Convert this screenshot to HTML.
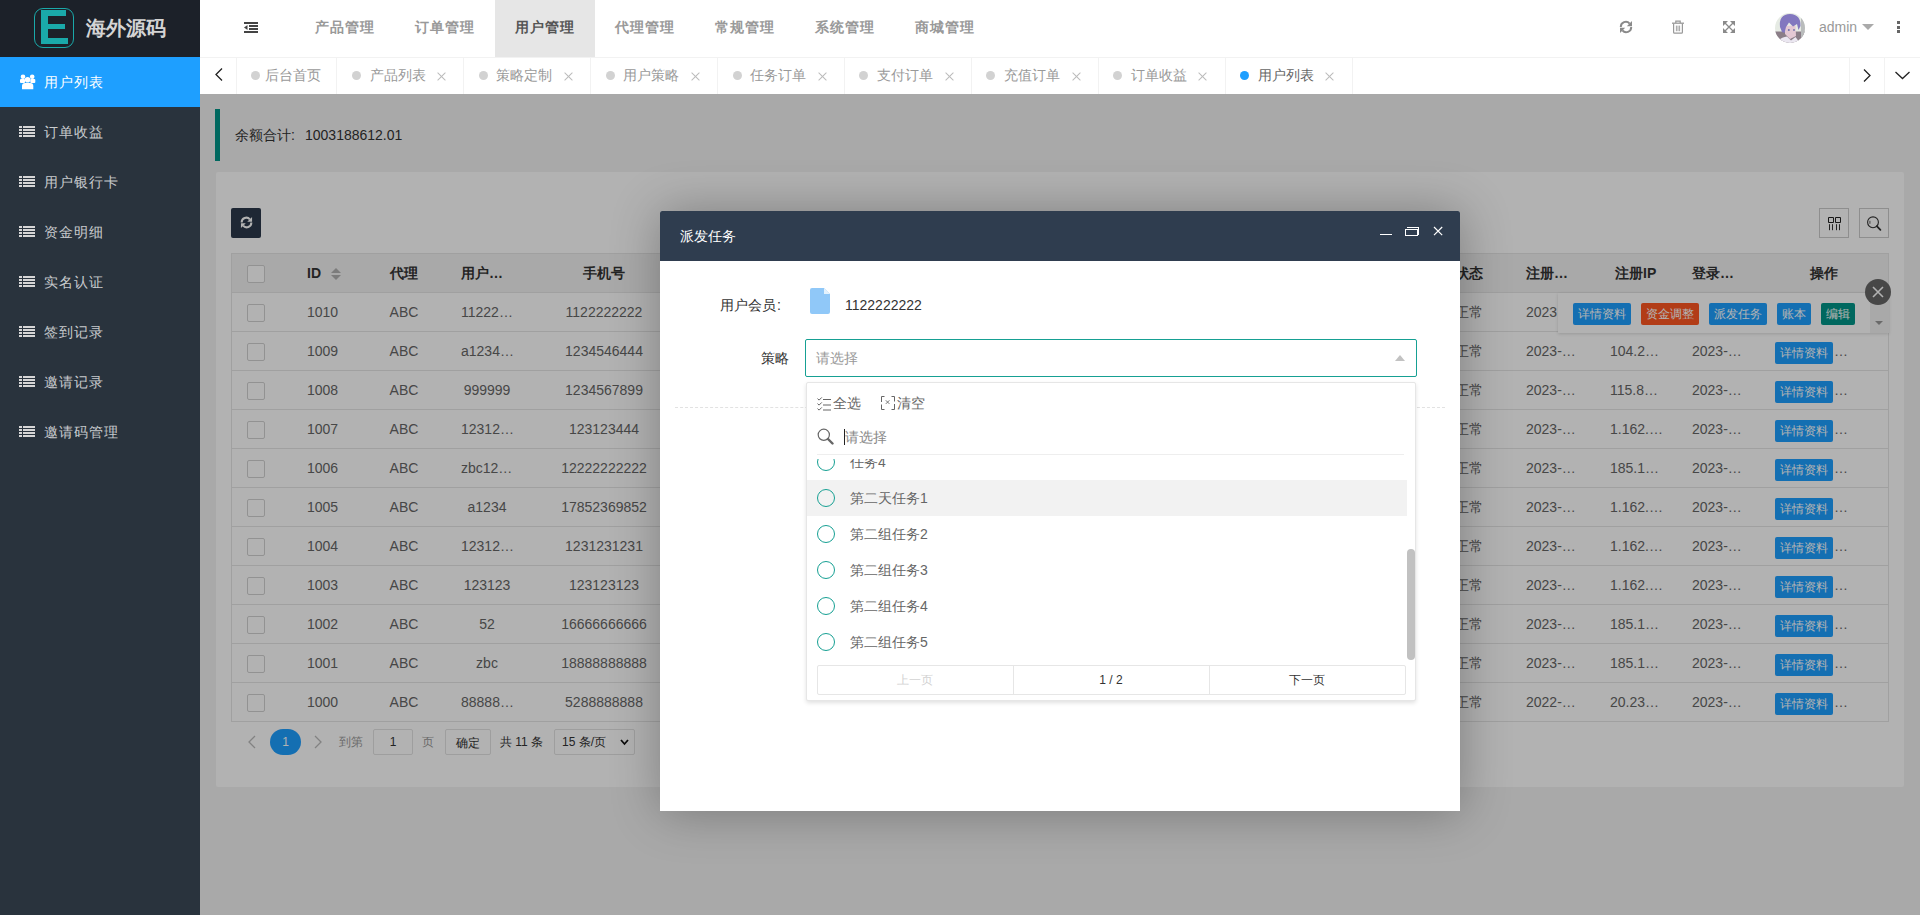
<!DOCTYPE html><html><head><meta charset="utf-8"><title>派发任务</title><style>
*{box-sizing:border-box}
html,body{margin:0;padding:0}
body{width:1920px;height:915px;overflow:hidden;position:relative;background:#f2f2f2;font-family:"Liberation Sans",sans-serif;font-size:14px;color:#666}
.a{position:absolute;white-space:nowrap}
.t{position:absolute;white-space:nowrap;height:20px;line-height:20px}
.c{text-align:center}
#side{position:absolute;left:0;top:0;width:200px;height:915px;background:#29333d}
#logo{position:absolute;left:0;top:0;width:200px;height:57px;background:#1c2129}
.mi{position:absolute;left:0;width:200px;height:50px}
.mi .tx{position:absolute;left:44px;top:15px;line-height:20px;color:rgba(255,255,255,.75);font-size:14px;letter-spacing:1px}
.li{position:absolute;left:19px;width:16px;height:11px}
.li i{position:absolute;left:0;width:16px;height:2px;background:#d6d6d6}
.li i:before{content:"";position:absolute;left:3px;top:0;width:1px;height:2px;background:#29333d}
#hdr{position:absolute;left:200px;top:0;width:1720px;height:57px;background:#fff}
.nv{position:absolute;top:17px;line-height:20px;color:#999;font-weight:bold;font-size:14px;letter-spacing:1px}
#tabs{position:absolute;left:200px;top:57px;width:1720px;height:37px;background:#fff;border-top:1px solid #f2f2f2}
.sep{position:absolute;top:0;width:1px;height:36px;background:#f2f2f2}
.dot{position:absolute;top:13px;width:9px;height:9px;border-radius:50%;background:#d2d2d2}
.tt{position:absolute;top:7px;line-height:20px;color:#999}
.cl{position:absolute;top:13.5px;width:9px;height:9px}
.cl:before,.cl:after{content:"";position:absolute;left:4px;top:-1px;width:1px;height:11px;background:#bbb;transform:rotate(45deg)}
.cl:after{transform:rotate(-45deg)}
#card{position:absolute;left:216px;top:172px;width:1688px;height:615px;background:#fff;border-radius:2px}
.hd{position:absolute;height:20px;line-height:20px;color:#333;font-weight:bold;white-space:nowrap}
.cel{position:absolute;height:20px;line-height:20px;color:#666;white-space:nowrap}
.cb{position:absolute;left:247px;width:18px;height:18px;border:1px solid #d2d2d2;border-radius:2px;background:#fff}
.hl{position:absolute;left:231px;width:1658px;height:1px;background:#e6e6e6}
.bx{position:absolute;height:22px;line-height:22px;font-size:12px;color:#fff;padding:0 5px;border-radius:2px;background:#1E9FFF}
#shade{position:absolute;left:200px;top:94px;width:1720px;height:821px;background:rgba(0,0,0,.3)}
#modal{position:absolute;left:660px;top:211px;width:800px;height:600px;background:#fff;border-radius:2px 2px 0 0;box-shadow:1px 1px 50px rgba(0,0,0,.3)}
#mtitle{position:absolute;left:0;top:0;width:800px;height:50px;background:#2f3d4f;border-radius:2px 2px 0 0}
.rad{position:absolute;left:817px;width:18px;height:18px;border:1px solid #009688;border-radius:50%}
</style></head><body>
<div id="side"><div id="logo">
<div class="a" style="left:34px;top:8px;width:40px;height:40px;border:1.5px solid #1aa9a9;border-radius:9px"></div>
<div class="a" style="left:41px;top:10px;width:7px;height:34px;background:#1aa9a9"></div>
<div class="a" style="left:41px;top:10px;width:25px;height:6px;background:#1aa9a9"></div>
<div class="a" style="left:41px;top:24px;width:24px;height:5px;background:#1aa9a9"></div>
<div class="a" style="left:41px;top:38px;width:27px;height:6px;background:#1aa9a9"></div>
<div class="a" style="left:86px;top:16px;line-height:24px;font-size:20px;font-weight:bold;color:#d4d4d4">海外源码</div>
</div>
<div class="mi" style="top:57px;background:#1E9FFF">
<svg class="a" style="left:19px;top:17px" width="17" height="16" viewBox="0 0 17 16"><circle cx="4" cy="2.8" r="2.3" fill="#fff"/><circle cx="13.2" cy="2.8" r="2.3" fill="#fff"/><rect x="1" y="5" width="5" height="4" rx="1" fill="#fff"/><rect x="11.3" y="5" width="5" height="4" rx="1" fill="#fff"/><circle cx="8.6" cy="5.8" r="2.8" fill="#fff"/><path d="M3 15.2V12q0-3 3-3h5.3q3 0 3 3v3.2z" fill="#fff"/></svg>
<div class="tx" style="color:#fff">用户列表</div></div>
<div class="mi" style="top:107px">
<div class="li" style="top:19px"><i style="top:0"></i><i style="top:3px"></i><i style="top:6px"></i><i style="top:9px"></i></div>
<div class="tx">订单收益</div></div>
<div class="mi" style="top:157px">
<div class="li" style="top:19px"><i style="top:0"></i><i style="top:3px"></i><i style="top:6px"></i><i style="top:9px"></i></div>
<div class="tx">用户银行卡</div></div>
<div class="mi" style="top:207px">
<div class="li" style="top:19px"><i style="top:0"></i><i style="top:3px"></i><i style="top:6px"></i><i style="top:9px"></i></div>
<div class="tx">资金明细</div></div>
<div class="mi" style="top:257px">
<div class="li" style="top:19px"><i style="top:0"></i><i style="top:3px"></i><i style="top:6px"></i><i style="top:9px"></i></div>
<div class="tx">实名认证</div></div>
<div class="mi" style="top:307px">
<div class="li" style="top:19px"><i style="top:0"></i><i style="top:3px"></i><i style="top:6px"></i><i style="top:9px"></i></div>
<div class="tx">签到记录</div></div>
<div class="mi" style="top:357px">
<div class="li" style="top:19px"><i style="top:0"></i><i style="top:3px"></i><i style="top:6px"></i><i style="top:9px"></i></div>
<div class="tx">邀请记录</div></div>
<div class="mi" style="top:407px">
<div class="li" style="top:19px"><i style="top:0"></i><i style="top:3px"></i><i style="top:6px"></i><i style="top:9px"></i></div>
<div class="tx">邀请码管理</div></div>
</div>
<div id="hdr">
<svg class="a" style="left:44px;top:22px" width="14" height="11" viewBox="0 0 14 11"><rect x="0" y="0" width="14" height="2" fill="#444"/><rect x="5" y="3" width="9" height="2" fill="#444"/><rect x="5" y="6" width="9" height="2" fill="#444"/><rect x="0" y="9" width="14" height="2" fill="#444"/><path d="M0 5.5L3.5 3v5z" fill="#444"/></svg>
<div class="nv" style="left:115px">产品管理</div>
<div class="nv" style="left:215px">订单管理</div>
<div class="a" style="left:295px;top:0;width:100px;height:57px;background:#e6e6e6"></div>
<div class="nv" style="left:315px;color:#555">用户管理</div>
<div class="nv" style="left:415px">代理管理</div>
<div class="nv" style="left:515px">常规管理</div>
<div class="nv" style="left:615px">系统管理</div>
<div class="nv" style="left:715px">商城管理</div>
<svg class="a" style="left:1419px;top:20px" width="14" height="14" viewBox="0 0 14 14"><path d="M1.8 7A5 5 0 0 1 10.6 3.6" stroke="#8a8a8a" stroke-width="2" fill="none"/><path d="M13 1v5.2H7.8z" fill="#8a8a8a"/><path d="M12.2 7A5 5 0 0 1 3.4 10.4" stroke="#8a8a8a" stroke-width="2" fill="none"/><path d="M1 13V7.8h5.2z" fill="#8a8a8a"/></svg>
<svg class="a" style="left:1472px;top:20px" width="12" height="14" viewBox="0 0 12 14"><path d="M3.8 3V1.2h4.4V3" stroke="#999" stroke-width="1.2" fill="none"/><path d="M0 3.2h12" stroke="#999" stroke-width="1.3"/><path d="M1.6 3.6V12.2q0 .9 .9 .9h7q.9 0 .9-.9V3.6" stroke="#999" stroke-width="1.2" fill="none"/><path d="M4.4 5.6v5.6M6 5.6v5.6M7.6 5.6v5.6" stroke="#999" stroke-width="0.9"/></svg>
<svg class="a" style="left:1523px;top:21px" width="12" height="12" viewBox="0 0 12 12"><path d="M0 0h5L0 5zM12 0v5L7 0zM0 12V7l5 5zM12 12H7l5-5z" fill="#8a8a8a"/><path d="M1.5 1.5l9 9M10.5 1.5l-9 9" stroke="#8a8a8a" stroke-width="1.3"/></svg>
<svg class="a" style="left:1575px;top:13px" width="30" height="30" viewBox="0 0 30 30"><defs><clipPath id="cp"><circle cx="15" cy="15" r="15"/></clipPath></defs><g clip-path="url(#cp)"><rect width="30" height="30" fill="#e6ebe4"/><rect y="18.5" width="30" height="12" fill="#8b7e88"/><rect x="26" y="4" width="4" height="20" fill="#b9bcbc"/><path d="M10 13L20.5 12.5L21 23L15 26L10 21z" fill="#e4c8d4"/><path d="M1 30Q6 24 12 23.5L16 27.5L20.5 24Q23 27 24.5 30z" fill="#ebe7f1"/><path d="M5 14Q3.5 1.5 15 1Q26 1.5 25.5 13L23.5 17L22 11L18 13.5L14 9.5L11 14L9.5 20L7 19Z" fill="#8277bf"/><circle cx="13.8" cy="17" r="1" fill="#6e70a8"/><circle cx="19" cy="17" r="0.9" fill="#6e70a8"/></g></svg>
<div class="t" style="left:1619px;top:17px;color:#999;font-size:14px">admin</div>
<div class="a" style="left:1662px;top:24px;width:0;height:0;border-left:6px solid transparent;border-right:6px solid transparent;border-top:6px solid #aaa"></div>
<div class="a" style="left:1697px;top:21px;width:3px;height:3px;background:#666"></div><div class="a" style="left:1697px;top:25.5px;width:3px;height:3px;background:#666"></div><div class="a" style="left:1697px;top:30px;width:3px;height:3px;background:#666"></div>
</div>
<div id="tabs">
<svg class="a" style="left:15px;top:10px" width="8" height="13" viewBox="0 0 8 13"><path d="M7 0.5L1 6.5l6 6" stroke="#222" stroke-width="1.3" fill="none"/></svg>
<div class="sep" style="left:36px"></div>
<div class="dot" style="left:51px"></div>
<div class="tt" style="left:65px">后台首页</div>
<div class="sep" style="left:136px"></div>
<div class="dot" style="left:151.8px;background:#d2d2d2"></div>
<div class="tt" style="left:169.5px;color:#999">产品列表</div>
<div class="cl" style="left:237.0px"></div>
<div class="sep" style="left:263.4px"></div>
<div class="dot" style="left:278.7px;background:#d2d2d2"></div>
<div class="tt" style="left:296.4px;color:#999">策略定制</div>
<div class="cl" style="left:363.9px"></div>
<div class="sep" style="left:390.3px"></div>
<div class="dot" style="left:405.6px;background:#d2d2d2"></div>
<div class="tt" style="left:423.3px;color:#999">用户策略</div>
<div class="cl" style="left:490.8px"></div>
<div class="sep" style="left:517.2px"></div>
<div class="dot" style="left:532.5px;background:#d2d2d2"></div>
<div class="tt" style="left:550.2px;color:#999">任务订单</div>
<div class="cl" style="left:617.7px"></div>
<div class="sep" style="left:644.1px"></div>
<div class="dot" style="left:659.4px;background:#d2d2d2"></div>
<div class="tt" style="left:677.1px;color:#999">支付订单</div>
<div class="cl" style="left:744.6px"></div>
<div class="sep" style="left:771.0px"></div>
<div class="dot" style="left:786.3px;background:#d2d2d2"></div>
<div class="tt" style="left:804.0px;color:#999">充值订单</div>
<div class="cl" style="left:871.5px"></div>
<div class="sep" style="left:897.9px"></div>
<div class="dot" style="left:913.2px;background:#d2d2d2"></div>
<div class="tt" style="left:930.9px;color:#999">订单收益</div>
<div class="cl" style="left:998.4px"></div>
<div class="sep" style="left:1024.8px"></div>
<div class="dot" style="left:1040.1px;background:#1E9FFF"></div>
<div class="tt" style="left:1057.8px;color:#666">用户列表</div>
<div class="cl" style="left:1125.3px"></div>
<div class="sep" style="left:1151.7px"></div>
<div class="sep" style="left:1649px"></div><div class="sep" style="left:1684px"></div>
<svg class="a" style="left:1663px;top:11px" width="8" height="13" viewBox="0 0 8 13"><path d="M1 0.5l6 6-6 6" stroke="#222" stroke-width="1.3" fill="none"/></svg>
<svg class="a" style="left:1695px;top:13px" width="15" height="9" viewBox="0 0 15 9"><path d="M0.5 1l7 6.5 7-6.5" stroke="#222" stroke-width="1.3" fill="none"/></svg>
</div>
<div class="a" style="left:215px;top:109px;width:5px;height:52px;background:#009688"></div>
<div class="t" style="left:235px;top:125px;color:#333">余额合计<span style="display:inline-block;width:14px">:</span>1003188612.01</div>
<div id="card"></div>
<div class="a" style="left:231px;top:208px;width:30px;height:30px;background:#2b394b;border-radius:2px"></div>
<svg class="a" style="left:240px;top:216px" width="13" height="13" viewBox="0 0 14 14"><path d="M1.8 7A5 5 0 0 1 10.6 3.6" stroke="#fff" stroke-width="2.2" fill="none"/><path d="M13 1v5.2H7.8z" fill="#fff"/><path d="M12.2 7A5 5 0 0 1 3.4 10.4" stroke="#fff" stroke-width="2.2" fill="none"/><path d="M1 13V7.8h5.2z" fill="#fff"/></svg>
<div class="a" style="left:1819px;top:208px;width:30px;height:30px;border:1px solid #ccc"></div>
<svg class="a" style="left:1827px;top:216px" width="16" height="16" viewBox="0 0 16 16"><path d="M1.5 1.5h5v5h-5zM8.5 1.5h5v5h-5z" stroke="#222" stroke-width="1" fill="none"/><path d="M2.5 8.2v6M5.5 8.2v6M9.5 8.2v6M12.5 8.2v6" stroke="#333" stroke-width="1"/></svg>
<div class="a" style="left:1859px;top:208px;width:30px;height:30px;border:1px solid #ccc"></div>
<svg class="a" style="left:1866px;top:215px" width="17" height="17" viewBox="0 0 17 17"><circle cx="7" cy="7.3" r="5.4" stroke="#333" stroke-width="1.1" fill="none"/><path d="M3.9 5.8v3" stroke="#333" stroke-width="0.8"/><path d="M10.8 11.2l3.6 3.6" stroke="#333" stroke-width="1.8" stroke-linecap="round"/></svg>
<div class="a" style="left:231px;top:253px;width:1658px;height:469px;border:1px solid #e6e6e6"></div>
<div class="a" style="left:232px;top:254px;width:1656px;height:38px;background:#f2f2f2"></div>
<div class="hl" style="top:292px"></div>
<div class="hl" style="top:331px"></div>
<div class="hl" style="top:370px"></div>
<div class="hl" style="top:409px"></div>
<div class="hl" style="top:448px"></div>
<div class="hl" style="top:487px"></div>
<div class="hl" style="top:526px"></div>
<div class="hl" style="top:565px"></div>
<div class="hl" style="top:604px"></div>
<div class="hl" style="top:643px"></div>
<div class="hl" style="top:682px"></div>
<div class="hl" style="top:721px"></div>
<div class="cb" style="top:265px"></div>
<div class="hd" style="left:307px;top:263px">ID</div>
<div class="a" style="left:331px;top:268px;border-left:5px solid transparent;border-right:5px solid transparent;border-bottom:5px solid #b2b2b2"></div>
<div class="a" style="left:331px;top:275px;border-left:5px solid transparent;border-right:5px solid transparent;border-top:5px solid #b2b2b2"></div>
<div class="hd" style="left:390px;top:263px">代理</div>
<div class="hd" style="left:461px;top:263px">用户…</div>
<div class="hd" style="left:583px;top:263px">手机号</div>
<div class="hd" style="left:1455px;top:263px">状态</div>
<div class="hd" style="left:1526px;top:263px">注册…</div>
<div class="hd" style="left:1615px;top:263px">注册IP</div>
<div class="hd" style="left:1692px;top:263px">登录…</div>
<div class="hd" style="left:1810px;top:263px">操作</div>
<div class="cb" style="top:304px"></div>
<div class="cel" style="left:307px;top:302px">1010</div>
<div class="cel c" style="left:364px;width:80px;top:302px">ABC</div>
<div class="cel" style="left:461px;top:302px">11222…</div>
<div class="cel c" style="left:544px;width:120px;top:302px">1122222222</div>
<div class="cel" style="left:1455px;top:302px">正常</div>
<div class="cel" style="left:1526px;top:302px">2023</div>
<div class="cb" style="top:343px"></div>
<div class="cel" style="left:307px;top:341px">1009</div>
<div class="cel c" style="left:364px;width:80px;top:341px">ABC</div>
<div class="cel" style="left:461px;top:341px">a1234…</div>
<div class="cel c" style="left:544px;width:120px;top:341px">1234546444</div>
<div class="cel" style="left:1455px;top:341px">正常</div>
<div class="cel" style="left:1526px;top:341px">2023-…</div>
<div class="cel" style="left:1610px;top:341px">104.2…</div>
<div class="cel" style="left:1692px;top:341px">2023-…</div>
<div class="bx" style="left:1775px;top:342px">详情资料</div>
<div class="cel" style="left:1834px;top:341px">…</div>
<div class="cb" style="top:382px"></div>
<div class="cel" style="left:307px;top:380px">1008</div>
<div class="cel c" style="left:364px;width:80px;top:380px">ABC</div>
<div class="cel c" style="left:437px;width:100px;top:380px">999999</div>
<div class="cel c" style="left:544px;width:120px;top:380px">1234567899</div>
<div class="cel" style="left:1455px;top:380px">正常</div>
<div class="cel" style="left:1526px;top:380px">2023-…</div>
<div class="cel" style="left:1610px;top:380px">115.8…</div>
<div class="cel" style="left:1692px;top:380px">2023-…</div>
<div class="bx" style="left:1775px;top:381px">详情资料</div>
<div class="cel" style="left:1834px;top:380px">…</div>
<div class="cb" style="top:421px"></div>
<div class="cel" style="left:307px;top:419px">1007</div>
<div class="cel c" style="left:364px;width:80px;top:419px">ABC</div>
<div class="cel" style="left:461px;top:419px">12312…</div>
<div class="cel c" style="left:544px;width:120px;top:419px">123123444</div>
<div class="cel" style="left:1455px;top:419px">正常</div>
<div class="cel" style="left:1526px;top:419px">2023-…</div>
<div class="cel" style="left:1610px;top:419px">1.162.…</div>
<div class="cel" style="left:1692px;top:419px">2023-…</div>
<div class="bx" style="left:1775px;top:420px">详情资料</div>
<div class="cel" style="left:1834px;top:419px">…</div>
<div class="cb" style="top:460px"></div>
<div class="cel" style="left:307px;top:458px">1006</div>
<div class="cel c" style="left:364px;width:80px;top:458px">ABC</div>
<div class="cel" style="left:461px;top:458px">zbc12…</div>
<div class="cel c" style="left:544px;width:120px;top:458px">12222222222</div>
<div class="cel" style="left:1455px;top:458px">正常</div>
<div class="cel" style="left:1526px;top:458px">2023-…</div>
<div class="cel" style="left:1610px;top:458px">185.1…</div>
<div class="cel" style="left:1692px;top:458px">2023-…</div>
<div class="bx" style="left:1775px;top:459px">详情资料</div>
<div class="cel" style="left:1834px;top:458px">…</div>
<div class="cb" style="top:499px"></div>
<div class="cel" style="left:307px;top:497px">1005</div>
<div class="cel c" style="left:364px;width:80px;top:497px">ABC</div>
<div class="cel c" style="left:437px;width:100px;top:497px">a1234</div>
<div class="cel c" style="left:544px;width:120px;top:497px">17852369852</div>
<div class="cel" style="left:1455px;top:497px">正常</div>
<div class="cel" style="left:1526px;top:497px">2023-…</div>
<div class="cel" style="left:1610px;top:497px">1.162.…</div>
<div class="cel" style="left:1692px;top:497px">2023-…</div>
<div class="bx" style="left:1775px;top:498px">详情资料</div>
<div class="cel" style="left:1834px;top:497px">…</div>
<div class="cb" style="top:538px"></div>
<div class="cel" style="left:307px;top:536px">1004</div>
<div class="cel c" style="left:364px;width:80px;top:536px">ABC</div>
<div class="cel" style="left:461px;top:536px">12312…</div>
<div class="cel c" style="left:544px;width:120px;top:536px">1231231231</div>
<div class="cel" style="left:1455px;top:536px">正常</div>
<div class="cel" style="left:1526px;top:536px">2023-…</div>
<div class="cel" style="left:1610px;top:536px">1.162.…</div>
<div class="cel" style="left:1692px;top:536px">2023-…</div>
<div class="bx" style="left:1775px;top:537px">详情资料</div>
<div class="cel" style="left:1834px;top:536px">…</div>
<div class="cb" style="top:577px"></div>
<div class="cel" style="left:307px;top:575px">1003</div>
<div class="cel c" style="left:364px;width:80px;top:575px">ABC</div>
<div class="cel c" style="left:437px;width:100px;top:575px">123123</div>
<div class="cel c" style="left:544px;width:120px;top:575px">123123123</div>
<div class="cel" style="left:1455px;top:575px">正常</div>
<div class="cel" style="left:1526px;top:575px">2023-…</div>
<div class="cel" style="left:1610px;top:575px">1.162.…</div>
<div class="cel" style="left:1692px;top:575px">2023-…</div>
<div class="bx" style="left:1775px;top:576px">详情资料</div>
<div class="cel" style="left:1834px;top:575px">…</div>
<div class="cb" style="top:616px"></div>
<div class="cel" style="left:307px;top:614px">1002</div>
<div class="cel c" style="left:364px;width:80px;top:614px">ABC</div>
<div class="cel c" style="left:437px;width:100px;top:614px">52</div>
<div class="cel c" style="left:544px;width:120px;top:614px">16666666666</div>
<div class="cel" style="left:1455px;top:614px">正常</div>
<div class="cel" style="left:1526px;top:614px">2023-…</div>
<div class="cel" style="left:1610px;top:614px">185.1…</div>
<div class="cel" style="left:1692px;top:614px">2023-…</div>
<div class="bx" style="left:1775px;top:615px">详情资料</div>
<div class="cel" style="left:1834px;top:614px">…</div>
<div class="cb" style="top:655px"></div>
<div class="cel" style="left:307px;top:653px">1001</div>
<div class="cel c" style="left:364px;width:80px;top:653px">ABC</div>
<div class="cel c" style="left:437px;width:100px;top:653px">zbc</div>
<div class="cel c" style="left:544px;width:120px;top:653px">18888888888</div>
<div class="cel" style="left:1455px;top:653px">正常</div>
<div class="cel" style="left:1526px;top:653px">2023-…</div>
<div class="cel" style="left:1610px;top:653px">185.1…</div>
<div class="cel" style="left:1692px;top:653px">2023-…</div>
<div class="bx" style="left:1775px;top:654px">详情资料</div>
<div class="cel" style="left:1834px;top:653px">…</div>
<div class="cb" style="top:694px"></div>
<div class="cel" style="left:307px;top:692px">1000</div>
<div class="cel c" style="left:364px;width:80px;top:692px">ABC</div>
<div class="cel" style="left:461px;top:692px">88888…</div>
<div class="cel c" style="left:544px;width:120px;top:692px">5288888888</div>
<div class="cel" style="left:1455px;top:692px">正常</div>
<div class="cel" style="left:1526px;top:692px">2022-…</div>
<div class="cel" style="left:1610px;top:692px">20.23…</div>
<div class="cel" style="left:1692px;top:692px">2023-…</div>
<div class="bx" style="left:1775px;top:693px">详情资料</div>
<div class="cel" style="left:1834px;top:692px">…</div>
<div class="a" style="left:1558px;top:293px;width:331px;height:40px;background:#fff;box-shadow:0 1px 3px rgba(0,0,0,.15)"></div>
<div class="a" style="left:1870px;top:293px;width:19px;height:40px;background:#f2f2f2"></div>
<div class="a" style="left:1875px;top:321px;border-left:4px solid transparent;border-right:4px solid transparent;border-top:4px solid #999"></div>
<div class="bx" style="left:1573px;top:303px;background:#1E9FFF">详情资料</div>
<div class="bx" style="left:1641px;top:303px;background:#FF5722">资金调整</div>
<div class="bx" style="left:1709px;top:303px;background:#1E9FFF">派发任务</div>
<div class="bx" style="left:1777px;top:303px;background:#1E9FFF">账本</div>
<div class="bx" style="left:1821px;top:303px;background:#009688">编辑</div>
<div class="a" style="left:1865px;top:279px;width:26px;height:26px;border-radius:50%;background:#666"></div>
<svg class="a" style="left:1872px;top:286px" width="12" height="12" viewBox="0 0 12 12"><path d="M1 1l10 10M11 1L1 11" stroke="#fff" stroke-width="1.6"/></svg>
<svg class="a" style="left:247px;top:735px" width="9" height="14" viewBox="0 0 9 14"><path d="M8 1L2 7l6 6" stroke="#bbb" stroke-width="1.3" fill="none"/></svg>
<div class="a" style="left:270px;top:729px;width:31px;height:26px;border-radius:13px;background:#1E9FFF;color:#fff;text-align:center;line-height:26px;font-size:12px">1</div>
<svg class="a" style="left:314px;top:735px" width="9" height="14" viewBox="0 0 9 14"><path d="M1 1l6 6-6 6" stroke="#bbb" stroke-width="1.3" fill="none"/></svg>
<div class="t" style="left:339px;top:732px;font-size:12px;color:#999">到第</div>
<div class="a" style="left:373px;top:729px;width:40px;height:26px;border:1px solid #e2e2e2;border-radius:2px;background:#fff;text-align:center;line-height:24px;font-size:12px;color:#333">1</div>
<div class="t" style="left:422px;top:732px;font-size:12px;color:#999">页</div>
<div class="a" style="left:445px;top:729px;width:46px;height:26px;border:1px solid #e2e2e2;border-radius:2px;background:#fff;text-align:center;line-height:26px;font-size:12px;color:#333">确定</div>
<div class="t" style="left:500px;top:732px;font-size:12px;color:#333">共 11 条</div>
<div class="a" style="left:554px;top:729px;width:81px;height:26px;border:1px solid #e2e2e2;border-radius:2px;background:#fff;line-height:24px;font-size:12px;color:#333;padding-left:7px">15 条/页</div>
<svg class="a" style="left:620px;top:739px" width="9" height="7" viewBox="0 0 9 7"><path d="M1 1l3.5 4L8 1" stroke="#111" stroke-width="1.8" fill="none"/></svg>
<div id="shade"></div>
<div id="modal"><div id="mtitle">
<div class="t" style="left:20px;top:15px;color:#fff">派发任务</div>
<div class="a" style="left:720px;top:23px;width:12px;height:1px;background:#fff"></div>
<div class="a" style="left:747px;top:16px;width:12px;height:1px;background:#fff"></div>
<div class="a" style="left:758px;top:16px;width:1px;height:8px;background:#fff"></div>
<div class="a" style="left:745px;top:18px;width:13px;height:7px;border:1.2px solid #fff"></div>
<svg class="a" style="left:773px;top:15px" width="10" height="10" viewBox="0 0 10 10"><path d="M1 1l8.2 8.2M9.2 1L1 9.2" stroke="#fff" stroke-width="1.2"/></svg>
</div></div>
<div class="t" style="left:720px;top:295px;color:#333">用户会员<span style="display:inline-block;width:14px;padding-left:1px">:</span></div>
<svg class="a" style="left:810px;top:288px" width="20" height="26" viewBox="0 0 20 26"><path d="M2 0h12l6 6v18a2 2 0 0 1-2 2H2a2 2 0 0 1-2-2V2a2 2 0 0 1 2-2z" fill="#90c8f8"/><path d="M14 0v6h6z" fill="#e3f2fd"/></svg>
<div class="t" style="left:845px;top:295px;color:#333">1122222222</div>
<div class="t" style="left:761px;top:348px;color:#333">策略</div>
<div class="a" style="left:805px;top:339px;width:612px;height:38px;border:1px solid #16a093;border-radius:2px;background:#fff"></div>
<div class="t" style="left:816px;top:348px;color:#999">请选择</div>
<div class="a" style="left:1395px;top:355px;border-left:5px solid transparent;border-right:5px solid transparent;border-bottom:6px solid #c2c2c2"></div>
<div class="a" style="left:675px;top:407px;width:770px;height:0;border-top:1px dashed #e2e2e2"></div>
<div class="a" style="left:806px;top:382px;width:610px;height:319px;border:1px solid #e6e6e6;background:#fff;box-shadow:0 2px 4px rgba(0,0,0,.12);border-radius:2px"></div>
<svg class="a" style="left:817px;top:397px" width="15" height="14" viewBox="0 0 15 14"><path d="M0.5 1.6l1.6 1.5L4.8 0.4M0.5 6.6l1.6 1.5L4.8 5.4M0.5 11.6l1.6 1.5L4.8 10.4" stroke="#666" stroke-width="1" fill="none"/><path d="M6 2.5h8M6 8h8M6 13h8" stroke="#666" stroke-width="1.1"/></svg>
<div class="t" style="left:833px;top:393px;color:#666">全选</div>
<svg class="a" style="left:881px;top:396px" width="14" height="14" viewBox="0 0 14 14"><path d="M3.5 0.5H0.5V6M0.5 8.5V13.5H3.5M10.5 0.5H13.5V5.5M13.5 8V13.5H10.5" stroke="#666" stroke-width="1" fill="none"/><path d="M4.8 4.3l3.6 3.6M8.4 4.3L4.8 7.9" stroke="#666" stroke-width="0.9"/></svg>
<div class="t" style="left:897px;top:393px;color:#666">清空</div>
<svg class="a" style="left:817px;top:428px" width="17" height="17" viewBox="0 0 17 17"><circle cx="6.8" cy="6.8" r="5.6" stroke="#666" stroke-width="1.2" fill="none"/><path d="M11 11l4.5 4.5" stroke="#666" stroke-width="2.4" stroke-linecap="round"/></svg>
<div class="a" style="left:844px;top:429px;width:1px;height:16px;background:#222"></div>
<div class="t" style="left:845px;top:427px;color:#888">请选择</div>
<div class="a" style="left:817px;top:454px;width:587px;height:1px;background:#eee"></div>
<div class="a" style="left:807px;top:459px;width:600px;height:201px;overflow:hidden">
<div class="a" style="left:10px;top:-6px;width:18px;height:18px;border:1.5px solid #16a093;border-radius:50%"></div>
<div class="t" style="left:43px;top:-7px;color:#666">任务4</div>
<div class="a" style="left:0;top:21px;width:600px;height:36px;background:#f2f2f2"></div>
<div class="a" style="left:10px;top:30px;width:18px;height:18px;border:1.5px solid #16a093;border-radius:50%"></div>
<div class="t" style="left:43px;top:29px;color:#666">第二天任务1</div>
<div class="a" style="left:10px;top:66px;width:18px;height:18px;border:1.5px solid #16a093;border-radius:50%"></div>
<div class="t" style="left:43px;top:65px;color:#666">第二组任务2</div>
<div class="a" style="left:10px;top:102px;width:18px;height:18px;border:1.5px solid #16a093;border-radius:50%"></div>
<div class="t" style="left:43px;top:101px;color:#666">第二组任务3</div>
<div class="a" style="left:10px;top:138px;width:18px;height:18px;border:1.5px solid #16a093;border-radius:50%"></div>
<div class="t" style="left:43px;top:137px;color:#666">第二组任务4</div>
<div class="a" style="left:10px;top:174px;width:18px;height:18px;border:1.5px solid #16a093;border-radius:50%"></div>
<div class="t" style="left:43px;top:173px;color:#666">第二组任务5</div>
</div>
<div class="a" style="left:1407px;top:549px;width:8px;height:111px;border-radius:4px;background:#c1c1c1"></div>
<div class="a" style="left:817px;top:665px;width:589px;height:30px;border:1px solid #e6e6e6;border-radius:2px"></div>
<div class="a" style="left:1013px;top:665px;width:1px;height:30px;background:#e6e6e6"></div>
<div class="a" style="left:1209px;top:665px;width:1px;height:30px;background:#e6e6e6"></div>
<div class="t c" style="left:817px;width:196px;top:670px;font-size:12px;color:#d2d2d2">上一页</div>
<div class="t c" style="left:1013px;width:196px;top:670px;font-size:12px;color:#333">1 / 2</div>
<div class="t c" style="left:1209px;width:196px;top:670px;font-size:12px;color:#333">下一页</div>
</body></html>
